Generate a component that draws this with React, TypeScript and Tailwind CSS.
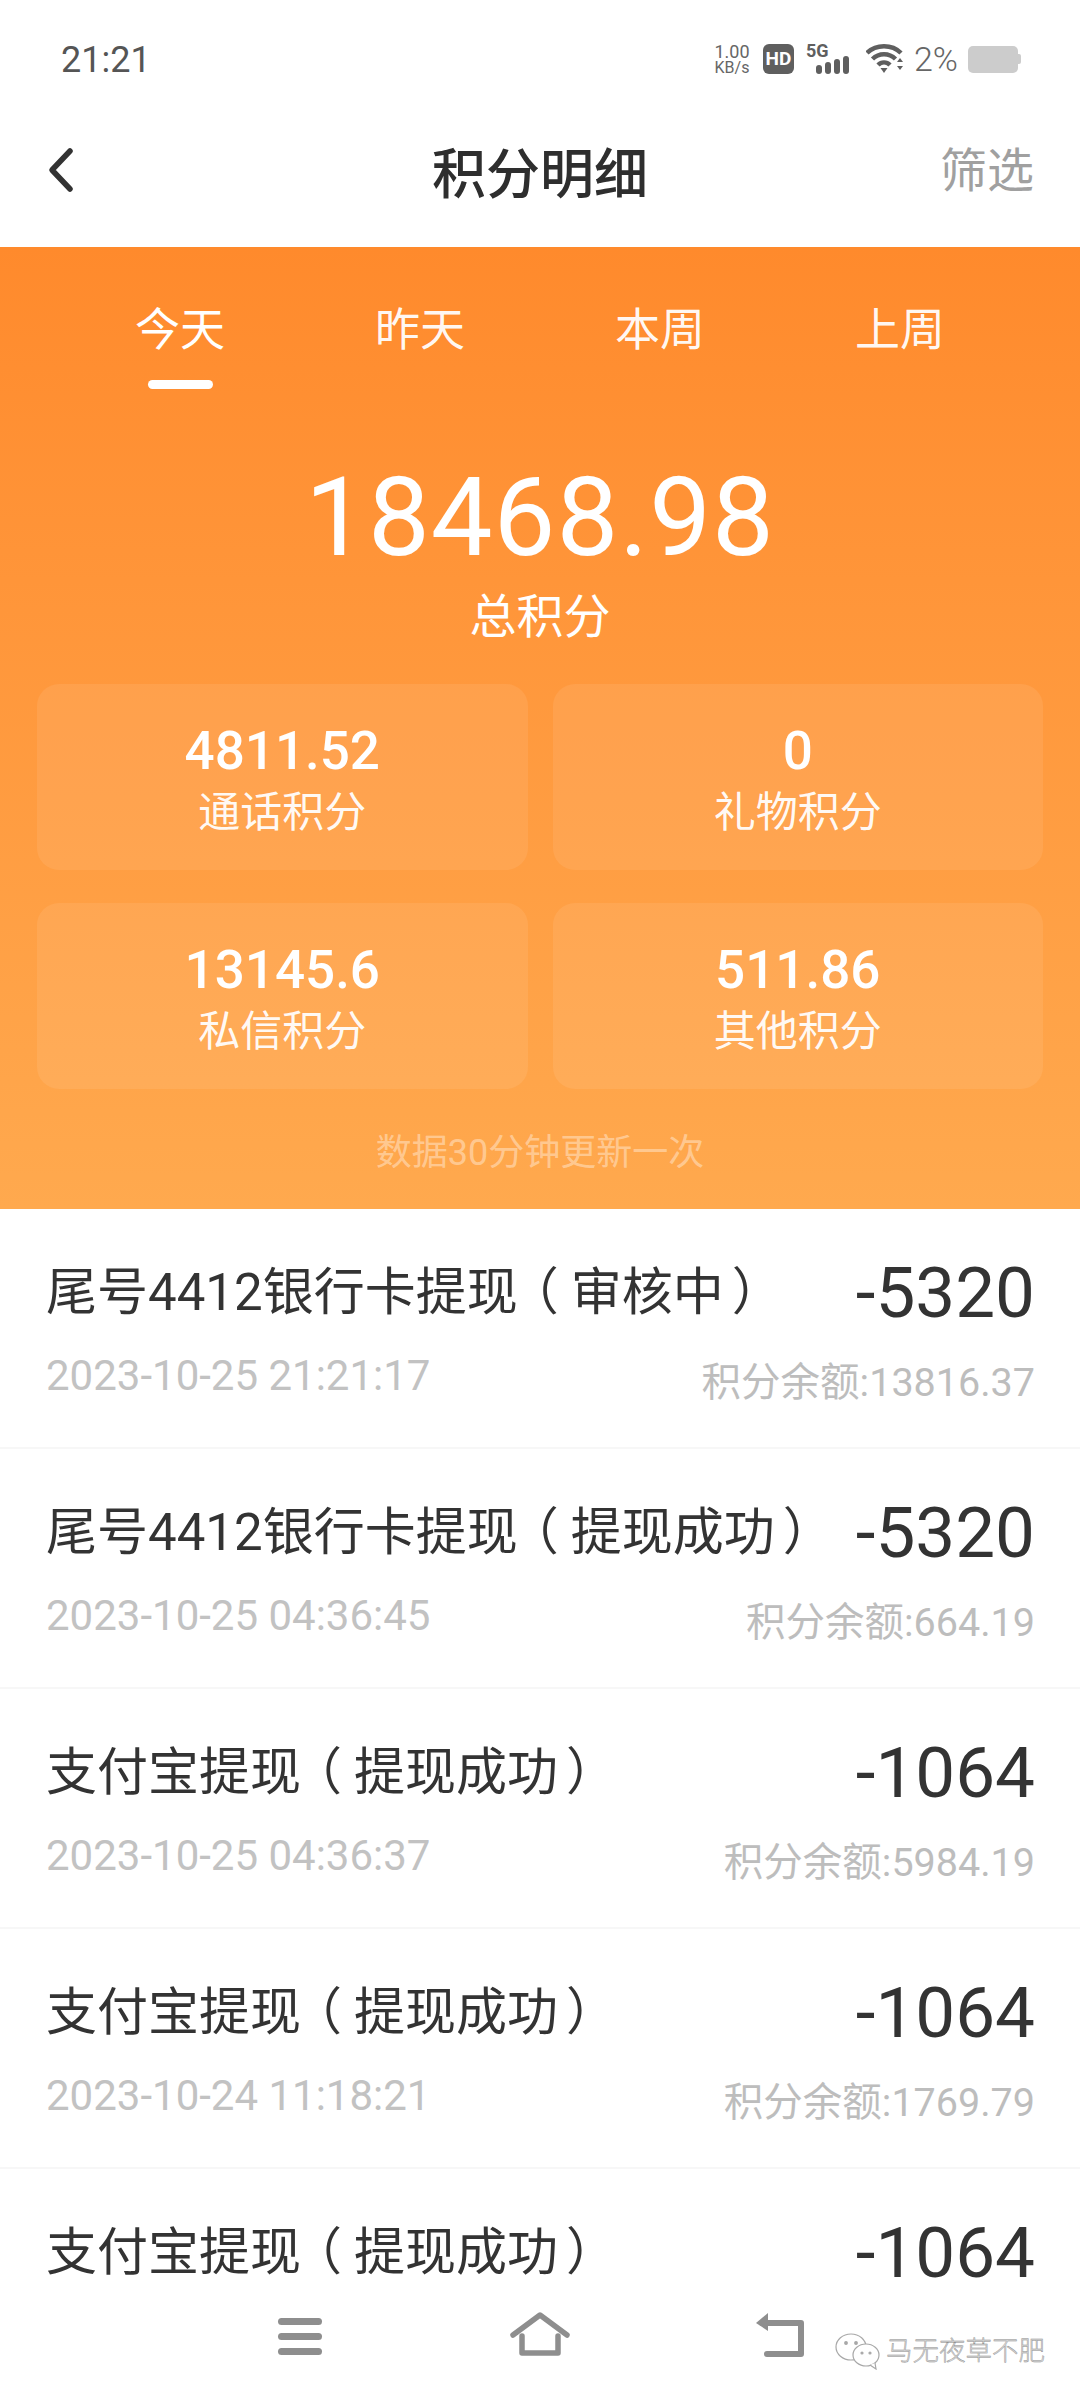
const stats = [
  { value: '4811.52', label: '通话积分' },
  { value: '0', label: '礼物积分' },
  { value: '13145.6', label: '私信积分' },
  { value: '511.86', label: '其他积分' },
];

// the fifth row is cut off by the nav bar, only its title and amount show
const records = [
  { title: '尾号4412银行卡提现', status: '审核中', amount: '-5320', date: '2023-10-25 21:21:17', balance: '积分余额:13816.37' },
  { title: '尾号4412银行卡提现', status: '提现成功', amount: '-5320', date: '2023-10-25 04:36:45', balance: '积分余额:664.19' },
  { title: '支付宝提现', status: '提现成功', amount: '-1064', date: '2023-10-25 04:36:37', balance: '积分余额:5984.19' },
  { title: '支付宝提现', status: '提现成功', amount: '-1064', date: '2023-10-24 11:18:21', balance: '积分余额:1769.79' },
  { title: '支付宝提现', status: '提现成功', amount: '-1064', date: '', balance: '' },
];

function StatusIcons() {
  return (
    <div className="flex items-center">
      <div className="flex flex-col items-center w-[36px] text-[#666]">
        <span className="text-[18px] leading-[17px]">1.00</span>
        <span className="text-[16px] leading-[15px]">KB/s</span>
      </div>
      <div className="ml-[13px] w-[31px] h-[30px] rounded-[6px] bg-[#5f5f5f] flex items-center justify-center text-white text-[19px] font-bold leading-[30px]">
        HD
      </div>
      <svg className="ml-[12px]" width="46" height="32" viewBox="0 0 46 32">
        <text x="0" y="14" fontSize="18" fontWeight="700" fill="#5f5f5f" fontFamily="Roboto">5G</text>
        <rect x="10" y="22" width="6" height="9" rx="3" fill="#5f5f5f" />
        <rect x="19" y="19" width="6" height="12" rx="3" fill="#5f5f5f" />
        <rect x="28" y="16" width="6" height="15" rx="3" fill="#5f5f5f" />
        <rect x="37" y="13" width="6" height="18" rx="3" fill="#5f5f5f" />
      </svg>
      <svg className="ml-[14px]" width="38" height="30" viewBox="0 0 38 30" fill="none">
        <path d="M1 9C10 0 26 0 35 9" stroke="#5f5f5f" strokeWidth="4.5" />
        <path d="M6.5 15C13 8.5 23 8.5 29.5 15" stroke="#5f5f5f" strokeWidth="4.5" />
        <path d="M12 21C15.5 17.5 20.5 17.5 24 21" stroke="#5f5f5f" strokeWidth="4.5" />
        <path d="M14.5 24H21.5L18 29Z" fill="#5f5f5f" />
        <path d="M31 18H37L34 14Z M31 22H37L34 26Z" fill="#5f5f5f" />
      </svg>
      <span className="ml-[10px] text-[34px] leading-[36px] text-[#666] font-light">2%</span>
      <div className="ml-[10px] flex items-center">
        <div className="w-[50px] h-[27px] rounded-[5px] bg-[#cccccc]" />
        <div className="w-[3px] h-[10px] rounded-r-[2px] bg-[#cccccc]" />
      </div>
    </div>
  );
}

function Row({ r }: { r: (typeof records)[number] }) {
  return (
    <div className="h-[240px] shrink-0 border-b-2 border-[#f7f7f7] pl-[46px] pr-[45px] pt-[44px]">
      <div className="flex items-center justify-between h-[80px]">
        <span className="text-[51px] leading-[80px] text-[#333] whitespace-nowrap shrink-0">
          {r.title}
          <span className="-ml-[10px] mr-[12px]">（</span>
          {r.status}
          <span className="ml-[8px]">）</span>
        </span>
        <span className="text-[71px] leading-[80px] text-[#333] shrink-0">{r.amount}</span>
      </div>
      <div className="flex items-start justify-between mt-[18px]">
        <span className="text-[42px] leading-[50px] text-[#c2c2c2]">{r.date}</span>
        <span className="mt-[7px] text-[39.5px] leading-[50px] text-[#bdbdbd]">{r.balance}</span>
      </div>
    </div>
  );
}

export default function App() {
  return (
    <div className="w-[1080px] h-[2400px] bg-white flex flex-col overflow-hidden font-['Roboto','Noto_Sans_CJK_SC',sans-serif]">
      <div className="h-[120px] shrink-0 pl-[61px] pr-[59px] pt-[42px] flex items-start justify-between">
        <span className="text-[36px] leading-[36px] text-[#555]">21:21</span>
        <div className="-mt-[1px]">
          <StatusIcons />
        </div>
      </div>

      <div className="h-[127px] shrink-0 relative flex items-center justify-center">
        <svg className="absolute left-[44px] top-[26px]" width="32" height="48" viewBox="0 0 32 48" fill="none">
          <path d="M26 5L8 24L26 43" stroke="#333" strokeWidth="5.5" strokeLinecap="round" strokeLinejoin="round" />
        </svg>
        <span className="text-[54px] leading-[76px] font-medium text-[#2e2e2e] -mt-[16px]">积分明细</span>
        <span className="absolute right-[46px] top-[21px] text-[47px] leading-[60px] text-[#a0a0a0]">筛选</span>
      </div>

      <div className="h-[962px] shrink-0 bg-gradient-to-b from-[#ff8a2c] to-[#ffa94e] px-[37px] text-white">
        <div className="grid grid-cols-4 px-[23px] pt-[54px]">
          {['今天', '昨天', '本周', '上周'].map((t, i) => (
            <div key={t} className="flex flex-col items-center">
              <span className={`text-[45px] leading-[60px] ${i === 0 ? 'text-white' : 'text-white/95'}`}>{t}</span>
              {i === 0 && <div className="mt-[19px] w-[65px] h-[9px] rounded-full bg-white" />}
            </div>
          ))}
        </div>

        <div className="mt-[69px] text-center text-[110px] leading-[120px] text-white tracking-[1px]">18468.98</div>
        <div className="mt-[9px] text-center text-[47px] leading-[60px]">总积分</div>

        <div className="mt-[37px] grid grid-cols-2 gap-x-[25px] gap-y-[33px]">
          {stats.map((s) => (
            <div key={s.label} className="h-[186px] rounded-[22px] bg-white/[0.08] flex flex-col items-center pt-[39px]">
              <span className="text-[53px] leading-[56px] font-medium">{s.value}</span>
              <span className="mt-[6px] text-[42px] leading-[56px] text-white/95">{s.label}</span>
            </div>
          ))}
        </div>

        <div className="mt-[40px] text-center text-[36px] leading-[48px] text-white/40">数据30分钟更新一次</div>
      </div>

      <div className="flex-1 min-h-0 overflow-hidden flex flex-col">
        {records.map((r, i) => (
          <Row key={i} r={r} />
        ))}
      </div>

      <div className="h-[120px] shrink-0 bg-white relative flex items-start">
        <div className="w-full grid grid-cols-3 px-[180px] pt-[32px]">
          <div className="flex justify-center">
            <svg width="46" height="44" viewBox="0 0 46 44" fill="#8e8e8e">
              <rect x="1" y="6" width="44" height="7" rx="3.5" />
              <rect x="1" y="21" width="44" height="7" rx="3.5" />
              <rect x="1" y="36" width="44" height="7" rx="3.5" />
            </svg>
          </div>
          <div className="flex justify-center">
            <svg width="60" height="44" viewBox="0 0 60 44" fill="none" stroke="#8e8e8e" strokeWidth="5.5" strokeLinecap="round" strokeLinejoin="round">
              <path d="M3 23L30 3L57 23" />
              <path d="M12 24V41H48V24" />
            </svg>
          </div>
          <div className="flex justify-center">
            <svg width="52" height="46" viewBox="0 0 52 46" fill="none">
              <path d="M8 11H47V42H13" stroke="#8e8e8e" strokeWidth="6" strokeLinecap="round" strokeLinejoin="round" />
              <path d="M14 1L2 11L14 19Z" fill="#8e8e8e" />
            </svg>
          </div>
        </div>

        <div className="absolute left-[834px] top-[52px] flex items-center">
          <svg width="48" height="38" viewBox="0 0 48 38" fill="#fff" stroke="#a8a8a8" strokeWidth="1.2">
            <ellipse cx="17" cy="15" rx="15" ry="13" />
            <ellipse cx="32" cy="23" rx="13" ry="11" />
            <path d="M36 33L42 37L41 31" />
            <circle cx="12" cy="11" r="1.3" fill="#a8a8a8" />
            <circle cx="22" cy="11" r="1.3" fill="#a8a8a8" />
            <circle cx="28" cy="21" r="1" fill="#a8a8a8" />
            <circle cx="36" cy="21" r="1" fill="#a8a8a8" />
          </svg>
          <span className="ml-[4px] text-[26.5px] leading-[38px] text-[#d8d8d8] font-light whitespace-nowrap [-webkit-text-stroke:0.4px_#8a8a8a]">马无夜草不肥</span>
        </div>
      </div>
    </div>
  );
}
